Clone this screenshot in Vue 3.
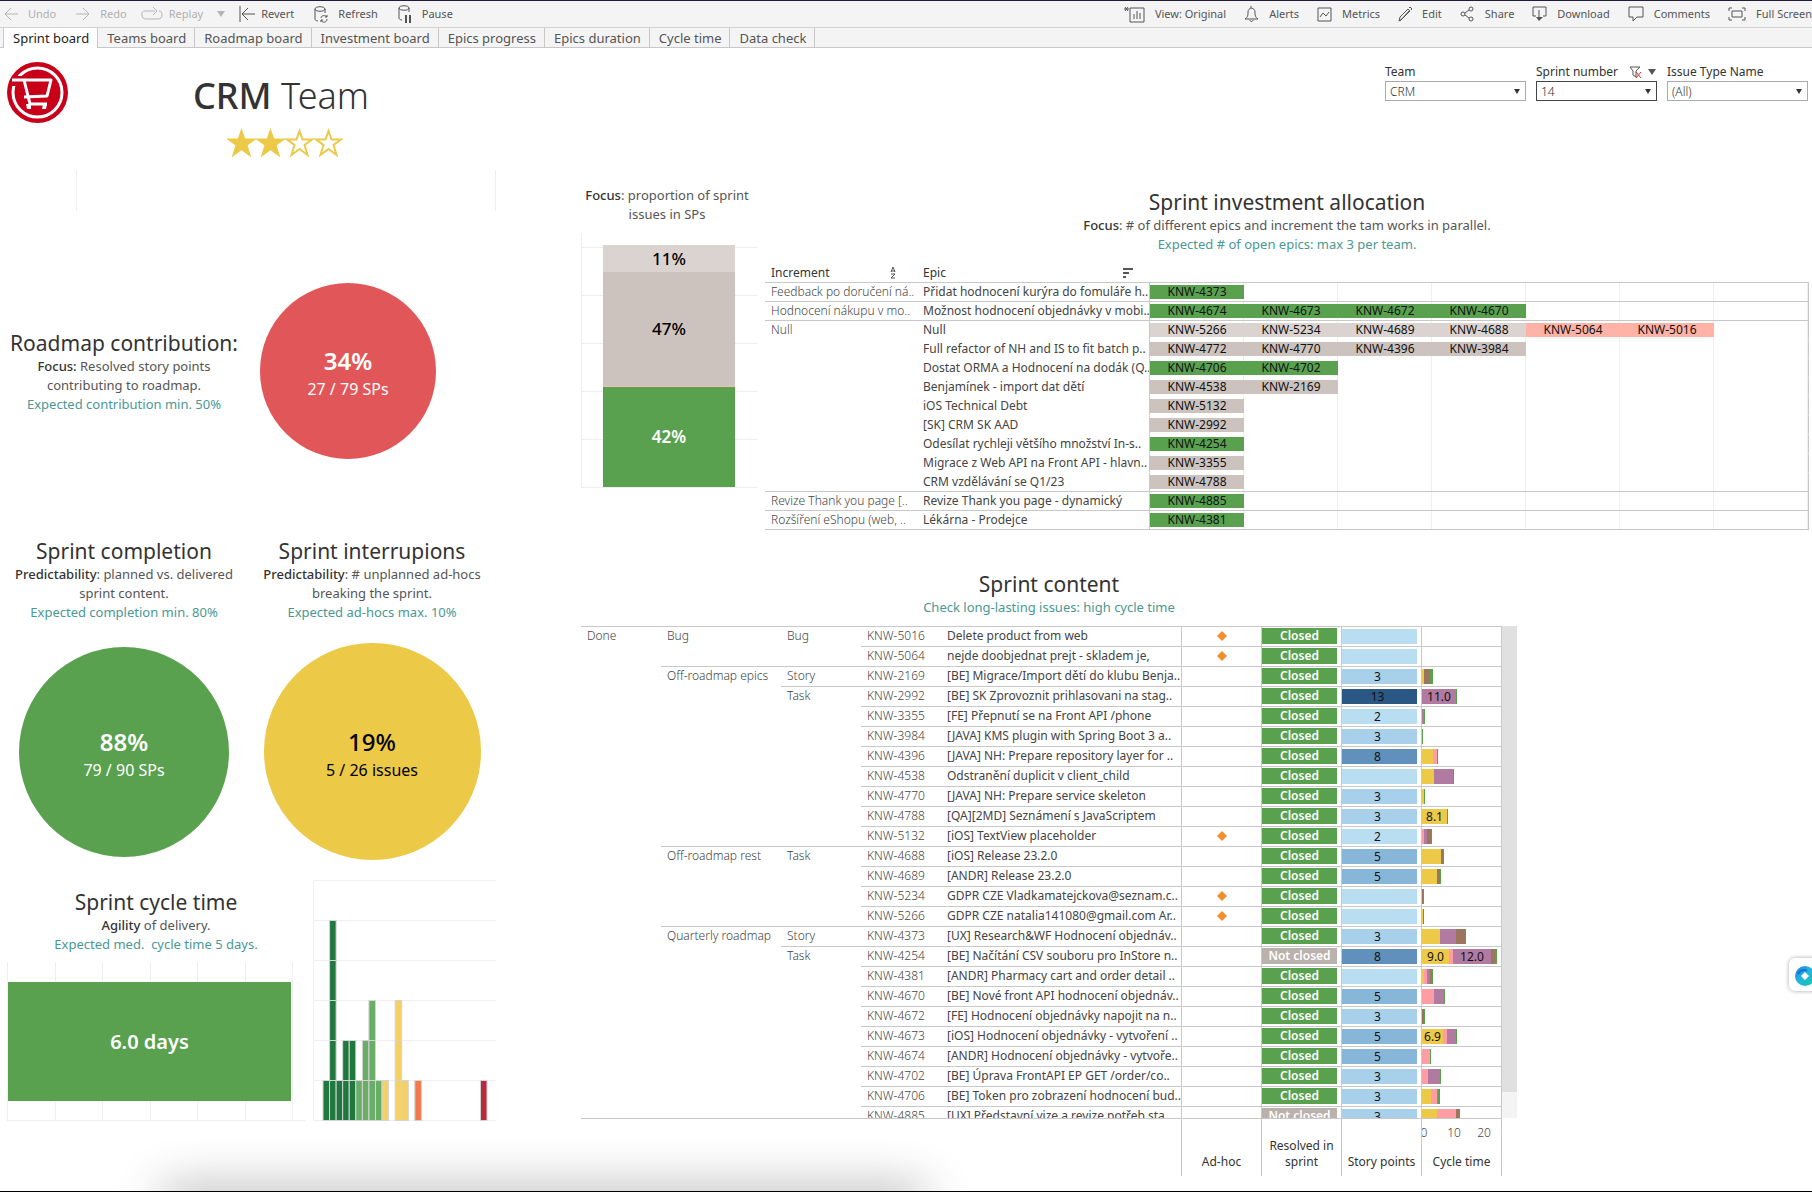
<script setup>
import { ref } from 'vue'

const tabs = ['Sprint board', 'Teams board', 'Roadmap board', 'Investment board', 'Epics progress', 'Epics duration', 'Cycle time', 'Data check']
const activeTab = ref('Sprint board')

const increments = [
  { name: 'Feedback po doručení ná..', epics: [['Přidat hodnocení kurýra do fomuláře h..', 'green', ['4373']]] },
  { name: 'Hodnocení nákupu v mo..', epics: [['Možnost hodnocení objednávky v mobi..', 'green', ['4674', '4673', '4672', '4670']]] },
  {
    name: 'Null',
    epics: [
      ['Null', 'light', ['5266', '5234', '4689', '4688', '5064', '5016']],
      ['Full refactor of NH and IS to fit batch p..', 'taupe', ['4772', '4770', '4396', '3984']],
      ['Dostat ORMA a Hodnocení na dodák (Q..', 'green', ['4706', '4702']],
      ['Benjamínek - import dat dětí', 'taupe', ['4538', '2169']],
      ['iOS Technical Debt', 'taupe', ['5132']],
      ['[SK] CRM SK AAD', 'taupe', ['2992']],
      ['Odesílat rychleji většího množství In-s..', 'green', ['4254']],
      ['Migrace z Web API na Front API - hlavn..', 'taupe', ['3355']],
      ['CRM vzdělávání se Q1/23', 'taupe', ['4788']]
    ]
  },
  { name: 'Revize Thank you page [..', epics: [['Revize Thank you page - dynamický', 'green', ['4885']]] },
  { name: 'Rozšíření eShopu (web, ..', epics: [['Lékárna - Prodejce', 'green', ['4381']]] }
]
const bugs = ['5064', '5016']

// Cycle segments: phase letter, bar length, optional label
const issues = [
  { status: 'Done', statusSpan: 25, area: 'Bug', areaSpan: 2, type: 'Bug', typeSpan: 2, key: '5016', text: 'Delete product from web', adhoc: true, cycle: [] },
  { key: '5064', text: 'nejde doobjednat prejt - skladem je,', adhoc: true, cycle: [] },
  { area: 'Off-roadmap epics', areaSpan: 9, type: 'Story', typeSpan: 1, key: '2169', text: '[BE] Migrace/Import dětí do klubu Benja..', sp: 3, cycle: [['y', 2], ['b', 6], ['g', 3]] },
  { type: 'Task', typeSpan: 8, key: '2992', text: '[BE] SK Zprovoznit prihlasovani na stag..', sp: 13, cycle: [['v', 34, '11.0'], ['g', 1]] },
  { key: '3355', text: '[FE] Přepnutí se na Front API /phone', sp: 2, cycle: [['v', 2], ['g', 1]] },
  { key: '3984', text: '[JAVA] KMS plugin with Spring Boot 3 a..', sp: 3, cycle: [['g', 1]] },
  { key: '4396', text: '[JAVA] NH: Prepare repository layer for ..', sp: 8, cycle: [['y', 11], ['p', 4], ['g', 1]] },
  { key: '4538', text: 'Odstranění duplicit v client_child', cycle: [['y', 12], ['v', 19], ['g', 1]] },
  { key: '4770', text: '[JAVA] NH: Prepare service skeleton', sp: 3, cycle: [['y', 2], ['g', 1]] },
  { key: '4788', text: '[QA][2MD] Seznámení s JavaScriptem', sp: 3, cycle: [['y', 25, '8.1'], ['g', 1]] },
  { key: '5132', text: '[iOS] TextView placeholder', sp: 2, adhoc: true, cycle: [['p', 2], ['v', 3], ['b', 4], ['g', 1]] },
  { area: 'Off-roadmap rest', areaSpan: 4, type: 'Task', typeSpan: 4, key: '4688', text: '[iOS] Release 23.2.0', sp: 5, cycle: [['y', 19], ['b', 2], ['g', 1]] },
  { key: '4689', text: '[ANDR] Release 23.2.0', sp: 5, cycle: [['y', 15], ['b', 3], ['g', 1]] },
  { key: '5234', text: 'GDPR CZE Vladkamatejckova@seznam.c..', adhoc: true, cycle: [['b', 1], ['g', 1]] },
  { key: '5266', text: 'GDPR CZE natalia141080@gmail.com Ar..', adhoc: true, cycle: [['y', 1], ['g', 1]] },
  { area: 'Quarterly roadmap', areaSpan: 10, type: 'Story', typeSpan: 1, key: '4373', text: '[UX] Research&WF Hodnocení objednáv..', sp: 3, cycle: [['y', 18], ['v', 16], ['b', 9], ['g', 1]] },
  { type: 'Task', typeSpan: 9, key: '4254', text: '[BE] Načítání CSV souboru pro InStore n..', sp: 8, open: true, cycle: [['y', 27, '9.0'], ['p', 4], ['v', 38, '12.0'], ['b', 4], ['g', 2]] },
  { key: '4381', text: '[ANDR] Pharmacy cart and order detail ..', cycle: [['y', 2], ['p', 3], ['v', 3], ['b', 1], ['g', 2]] },
  { key: '4670', text: '[BE] Nové front API hodnocení objednáv..', sp: 5, cycle: [['p', 12], ['v', 10], ['g', 1]] },
  { key: '4672', text: '[FE] Hodnocení objednávky napojit na n..', sp: 3, cycle: [['b', 2], ['g', 1]] },
  { key: '4673', text: '[iOS] Hodnocení objednávky - vytvoření ..', sp: 5, cycle: [['y', 21, '6.9'], ['p', 4], ['v', 9], ['g', 1]] },
  { key: '4674', text: '[ANDR] Hodnocení objednávky - vytvoře..', sp: 5, cycle: [['p', 8], ['g', 1]] },
  { key: '4702', text: '[BE] Úprava FrontAPI EP GET /order/co..', sp: 3, cycle: [['p', 6], ['v', 12], ['g', 1]] },
  { key: '4706', text: '[BE] Token pro zobrazení hodnocení bud..', sp: 3, cycle: [['y', 9], ['p', 6], ['v', 1], ['g', 2]] },
  { key: '4885', text: '[UX] Představní vize a revize potřeb sta..', sp: 3, open: true, cycle: [['y', 15], ['p', 19], ['b', 3], ['g', 1]] }
]

// Histogram bins: index, count, colour
const bins = [
  [0, 1, '#21783f'], [1, 5, '#21783f'], [2, 1, '#21783f'], [3, 2, '#21783f'], [4, 2, '#21783f'],
  [5, 1, '#69ae66'], [6, 2, '#69ae66'], [7, 3, '#69ae66'], [8, 1, '#69ae66'],
  [9, 1, '#f4d166'], [11, 3, '#f4d166'], [12, 1, '#f4d166'], [14, 1, '#f3784b'], [24, 1, '#b92a41']
]
const binX = i => 10 + i * 6.56
</script>

<template>
  <div class="page">
    <header class="toolbar">
      <div class="tools">
        <button class="tool off" disabled>
          <svg width="14" height="14" viewBox="0 0 14 14"><path d="M14 7H1M7 1 1 7l6 6" /></svg>Undo
        </button>
        <button class="tool off" disabled>
          <svg width="14" height="14" viewBox="0 0 14 14"><path d="M0 7h13M7 1l6 6-6 6" /></svg>Redo
        </button>
        <button class="tool off near tight" disabled>
          <svg width="22" height="14" viewBox="0 0 22 14"><path d="M14 4H4a3 3 0 0 0-3 4c0 3 2 4 4 4h12c3 0 4-2 4-4 0-3-1-4-3-4M12 0l4 4-4 4" /></svg>Replay
        </button>
        <button class="tool near off" aria-label="Replay options" disabled>
          <svg width="8" height="6" viewBox="0 0 8 6"><path class="solid" d="M0 0h8L4 6z" /></svg>
        </button>
        <button class="tool near tight">
          <svg width="16" height="16" viewBox="0 0 16 16"><path d="M1 0v16M16 8H3M9 2 3 8l6 6" /></svg>Revert
        </button>
        <button class="tool">
          <svg width="14" height="17" viewBox="0 0 14 17"><path d="M1 3v10c0 1 1 2 3 2M11 3v4M1 3c0-3 10-3 10 0s-10 3-10 0M7 12c0-3 5-3 6-1M13 9v2h-2M13 13c0 4-5 4-6 1M7 16v-2h2" /></svg>Refresh
        </button>
        <button class="tool">
          <svg width="14" height="18" viewBox="0 0 14 18"><path d="M1 3v10c0 1 1 2 3 2M11 3v4M1 3c0-3 10-3 10 0s-10 3-10 0" /><path d="M8 10v8M12 10v8" stroke-width="2" /></svg>Pause
        </button>
      </div>
      <div class="tools end">
        <button class="tool">
          <svg width="21" height="17" viewBox="0 0 21 17"><path d="M6 2h14v14H6zM10 8v5M13 5v8M16 7v6M0 3h5M1 1l3 4M4 1 1 5" /></svg>View: Original
        </button>
        <button class="tool">
          <svg width="15" height="16" viewBox="0 0 15 16"><path d="M1 13c3-2 3-4 3-7 0-5 7-5 7 0 0 3 0 5 3 7zM7 2V0M6 14c0 2 3 2 3 0" /></svg>Alerts
        </button>
        <button class="tool">
          <svg width="15" height="15" viewBox="0 0 15 15"><path d="M1 1h13v13H1zM3 10l3-4 3 3 3-4" /></svg>Metrics
        </button>
        <button class="tool">
          <svg width="14" height="15" viewBox="0 0 14 15"><path d="M1 14l1-4L10 2l2 2-8 8zM11 1l1-1 2 2-1 1M2 14l9-10" /></svg>Edit
        </button>
        <button class="tool">
          <svg width="15" height="16" viewBox="0 0 15 16"><circle cx="3" cy="8" r="2" /><circle cx="11" cy="3" r="2" /><circle cx="11" cy="13" r="2" /><path d="M5 7l4-3M5 9l4 3" /></svg>Share
        </button>
        <button class="tool">
          <svg width="15" height="16" viewBox="0 0 15 16"><path d="M4 10H1V1h13v9h-3M7 4v9" /><path class="solid" d="M4 11h7l-4 4z" /></svg>Download
        </button>
        <button class="tool">
          <svg width="16" height="16" viewBox="0 0 16 16"><path d="M1 1h14v10H9l-4 4v-4H1z" /></svg>Comments
        </button>
        <button class="tool">
          <svg width="18" height="14" viewBox="0 0 18 14"><path d="M4 1H1v3M14 1h3v3M4 13H1v-3M14 13h3v-3M4 4h10v6H4z" /></svg>Full Screen
        </button>
      </div>
    </header>

    <nav class="tabs">
      <button v-for="t in tabs" :key="t" class="tab" :class="{ active: t === activeTab }" @click="activeTab = t">{{ t }}</button>
    </nav>

    <section class="heading">
      <div class="brand">
        <svg class="logo" width="61" height="61" viewBox="0 0 61 61" role="img" aria-label="Shop logo">
          <circle cx="30.5" cy="30.5" r="30.5" fill="#c8001a" />
          <circle cx="30.5" cy="30.5" r="24.5" fill="none" stroke="#fff" stroke-width="3" />
          <path d="M7 14h8v10H5z" fill="#c8001a" />
          <g fill="none" stroke="#fff" stroke-width="3" stroke-linejoin="round">
            <path d="M5 18h39l-4 16-23 1" />
            <path d="M17 18l6 24h17" />
          </g>
          <path d="M19 42h5v5h-4zM36 42h4l-1 5h-4z" fill="#fff" />
        </svg>
        <div class="team">
          <h1><b>CRM</b> Team</h1>
          <svg width="116" height="30" viewBox="0 0 116 30" role="img" aria-label="2 of 4 stars">
            <path v-for="i in 4" :key="i" :transform="`translate(${(i - 1) * 29} 0)`" :fill="i < 3 ? '#edc948' : 'none'" stroke="#edc948" stroke-width="2"
              d="M14.500 3l3 8.500h9.500l-7.500 5.500 3 10-8-6-8 6 3-10-7.500-5.500h9.500z" />
          </svg>
        </div>
      </div>
      <form class="filters">
        <div class="filter">
          <label for="f-team">Team</label>
          <div class="pick"><select id="f-team"><option>CRM</option></select><i class="caret"></i></div>
        </div>
        <div class="filter narrow">
          <div class="caption">
            <label for="f-sprint">Sprint number</label>
            <svg width="28" height="13" viewBox="0 0 28 13"><path d="M1 1h10L7 5v6L4 9V5z" fill="none" stroke="#555" /><path d="M7 6l5 6M12 6l-5 6" stroke="#d8302a" /><path d="M19 3h8l-4 6z" fill="#555" /></svg>
          </div>
          <div class="pick strong"><select id="f-sprint"><option>14</option></select><i class="caret"></i></div>
        </div>
        <div class="filter">
          <label for="f-type">Issue Type Name</label>
          <div class="pick"><select id="f-type"><option>(All)</option></select><i class="caret"></i></div>
        </div>
      </form>
    </section>

    <main class="board">
      <div class="metrics">
        <div class="strip"></div>

        <div class="roadmap">
          <div class="blurb">
            <h2>Roadmap contribution:</h2>
            <p><b>Focus:</b> Resolved story points<br />contributing to roadmap.</p>
            <p class="goal">Expected contribution min. 50%</p>
          </div>
          <div class="disc small red"><strong>34%</strong><span>27 / 79 SPs</span></div>
        </div>

        <div class="pair">
          <div class="blurb">
            <h2>Sprint completion</h2>
            <p><b>Predictability</b>: planned vs. delivered<br />sprint content.</p>
            <p class="goal">Expected completion min. 80%</p>
          </div>
          <div class="blurb">
            <h2>Sprint interrupions</h2>
            <p><b>Predictability</b>: # unplanned ad-hocs<br />breaking the sprint.</p>
            <p class="goal">Expected ad-hocs max. 10%</p>
          </div>
          <div class="disc medium green"><strong>88%</strong><span>79 / 90 SPs</span></div>
          <div class="disc large yellow"><strong>19%</strong><span>5 / 26 issues</span></div>
        </div>

        <div class="cycle">
          <div class="median">
            <div class="blurb">
              <h2>Sprint cycle time</h2>
              <p><b>Agility</b> of delivery.</p>
              <p class="goal">Expected med.&nbsp; cycle time 5 days.</p>
            </div>
            <div class="gauge">
              <i v-for="i in 6" :key="i"></i>
              <div class="value">6.0 days</div>
            </div>
          </div>
          <svg class="histogram" width="183" height="241" viewBox="0 0 183 241" role="img" aria-label="Cycle time distribution">
            <path d="M.5 0v241M0 .5h183M0 40.500h183M0 80.500h183M0 120.500h183M0 160.500h183M0 200.500h183M0 240.500h183" stroke="#f0f0f0" />
            <rect v-for="b in bins" :key="b[0]" :x="binX(b[0])" :y="240.5 - b[1] * 40" width="6.56" :height="b[1] * 40" :fill="b[2]" stroke="#d3d3d3" />
            <path d="M10 200.500h59M82 200.500h13M17 160.500h6M17 120.500h6M17 80.500h6M56 160.500h6M82 160.500h6" stroke="#d3d3d3" />
          </svg>
        </div>
      </div>

      <div class="detail">
        <div class="top">
          <div class="split">
            <p><b>Focus</b>: proportion of sprint<br />issues in SPs</p>
            <div class="stack">
              <div class="part light">11%</div>
              <div class="part taupe">47%</div>
              <div class="part green">42%</div>
            </div>
          </div>

          <section class="invest">
            <div class="blurb">
              <h2>Sprint investment allocation</h2>
              <p><b>Focus</b>: # of different epics and increment the tam works in parallel.</p>
              <p class="goal">Expected # of open epics: max 3 per team.</p>
            </div>
            <table class="epics">
              <colgroup><col class="c-inc" /><col class="c-epic" /><col /></colgroup>
              <thead>
                <tr>
                  <th><div class="sortable wide">Increment
                    <svg width="8" height="12" viewBox="0 0 8 12"><path d="M2 5l2-5 2 5M2 4h4M2 7h4L2 11h4" fill="none" stroke="#555" /></svg></div></th>
                  <th><div class="sortable">Epic
                    <svg width="10" height="11" viewBox="0 0 10 11"><path d="M0 1h10M0 5h6M0 9h3" stroke="#555" stroke-width="2" /></svg></div></th>
                  <th></th>
                </tr>
              </thead>
              <tbody>
                <template v-for="inc in increments" :key="inc.name">
                  <tr v-for="(e, i) in inc.epics" :key="e[0]" :class="{ first: i === 0 }">
                    <td v-if="i === 0" class="inc" :rowspan="inc.epics.length">{{ inc.name }}</td>
                    <td class="epic">{{ e[0] }}</td>
                    <td class="plot">
                      <div class="track">
                        <span v-for="k in e[2]" :key="k" class="unit" :class="bugs.includes(k) ? 'salmon' : e[1]">KNW-{{ k }}</span>
                      </div>
                    </td>
                  </tr>
                </template>
              </tbody>
            </table>
          </section>
        </div>

        <section class="content">
          <div class="blurb">
            <h2>Sprint content</h2>
            <p class="goal">Check long-lasting issues: high cycle time</p>
          </div>
          <div class="viewport">
            <table class="issues">
              <colgroup>
                <col class="w80" /><col class="w120" /><col class="w80" /><col class="w80" /><col />
                <col class="w80" /><col class="w80" /><col class="w80" /><col class="w81" />
              </colgroup>
              <tbody>
                <tr v-for="r in issues" :key="r.key">
                  <td v-if="r.status" :rowspan="r.statusSpan">{{ r.status }}</td>
                  <td v-if="r.area" :rowspan="r.areaSpan">{{ r.area }}</td>
                  <td v-if="r.type" :rowspan="r.typeSpan">{{ r.type }}</td>
                  <td>KNW-{{ r.key }}</td>
                  <td class="summary">{{ r.text }}</td>
                  <td class="cell"><svg v-if="r.adhoc" class="mark" width="10" height="10" viewBox="0 0 10 10"><path d="M5 0l5 5-5 5-5-5z" fill="#f28e2b" /></svg></td>
                  <td class="cell"><div class="chip" :class="{ open: r.open }">{{ r.open ? 'Not closed' : 'Closed' }}</div></td>
                  <td class="cell"><div class="points" :class="'sp' + (r.sp || 0)">{{ r.sp }}</div></td>
                  <td class="cell last">
                    <div class="phases"><span v-for="(s, i) in r.cycle" :key="i" :class="'ph-' + s[0]" :style="{ width: s[1] + 'px' }">{{ s[2] }}</span></div>
                  </td>
                </tr>
              </tbody>
            </table>
            <div class="scroll"><div class="thumb"></div></div>
          </div>
          <div class="axes">
            <div class="axis">Ad-hoc</div>
            <div class="axis">Resolved in<br />sprint</div>
            <div class="axis">Story points</div>
            <div class="axis scale">
              <div class="ticks"><span>0</span><span>10</span><span>20</span></div>
              Cycle time
            </div>
          </div>
        </section>
      </div>
    </main>

    <button class="assistant" aria-label="Assistant">
      <svg width="20" height="20" viewBox="0 0 20 20">
        <defs><linearGradient id="asst" x1="0" y1="0" x2="1" y2="1"><stop offset="0" stop-color="#1f7fe0" /><stop offset=".5" stop-color="#22b8dc" /><stop offset="1" stop-color="#10c9a0" /></linearGradient></defs>
        <circle cx="10" cy="10" r="10" fill="url(#asst)" />
        <path d="M3 8c2-4 6-5 9-3" fill="none" stroke="#1a6fd8" stroke-width="2" />
        <path d="M10 6l4 4-4 4-4-4z" fill="#fff" />
      </svg>
    </button>
    <div class="dock"></div>
  </div>
</template>

<style>
body {
  margin: 0;
  background: #fff;
}
</style>

<style scoped>
.page {
  position: relative;
  box-sizing: border-box;
  min-height: 100vh;
  overflow: hidden;
  border-top: 1px solid #1d1d33;
  border-bottom: 1px solid #000;
  color: #333;
  font-family: "Noto Sans", sans-serif;
  font-size: 12px;
}
button {
  font-family: inherit;
  cursor: pointer;
}
h1, h2, p {
  margin: 0;
  font-weight: 400;
}
b {
  font-weight: 500;
  color: #333;
}

/* Toolbar */
.toolbar {
  display: flex;
  justify-content: space-between;
  height: 26px;
  background: #f4f4f4;
  border-bottom: 1px solid #d0d0d0;
}
.tools {
  display: flex;
  align-items: center;
  padding-left: 4px;
}
.tool {
  display: flex;
  align-items: center;
  gap: 10px;
  margin-right: 20px;
  padding: 0;
  border: 0;
  background: none;
  color: #555;
  font-size: 11px;
  line-height: 20px;
  white-space: nowrap;
}
.tool svg {
  fill: none;
  stroke: #555;
}
.tool .solid {
  fill: #555;
  stroke: none;
}
.off {
  color: #b0b0b0;
  cursor: default;
}
.off svg {
  stroke: #b4b4b4;
}
.off .solid {
  fill: #b4b4b4;
}
.near {
  margin-left: -6px;
}
.tight {
  gap: 6px;
}
.end .tool {
  margin: 0 0 0 18px;
}

/* Sheet tabs */
.tabs {
  display: flex;
  height: 20px;
  padding-left: 3px;
  background: #f4f4f4;
  box-shadow: inset 0 -1px #c8c8c8;
}
.tab {
  padding: 0 8px 0 9px;
  border: 0;
  border-right: 1px solid #c8c8c8;
  background: none;
  color: #555;
  font-size: 13px;
  line-height: 18px;
}
.tab.active {
  border-left: 1px solid #c8c8c8;
  background: #fff;
  color: #222;
}

/* Title and filters */
.heading {
  display: flex;
  justify-content: space-between;
  height: 122px;
}
.brand {
  display: flex;
}
.logo {
  margin: 14px 0 0 7px;
}
.team {
  display: flex;
  flex-direction: column;
  align-items: center;
  width: 426px;
  padding-top: 24px;
}
h1 {
  font-size: 36px;
  font-weight: 300;
  line-height: 48px;
  margin-bottom: 8px;
}
.team svg {
  margin-left: 8px;
}
.filters {
  display: flex;
  gap: 10px;
  padding: 15px 4px 0 0;
}
.filter {
  width: 141px;
}
.narrow {
  width: 121px;
}
.filter label {
  display: block;
  line-height: 18px;
}
.caption {
  display: flex;
  align-items: center;
  justify-content: space-between;
}
.pick {
  position: relative;
}
.pick select {
  display: block;
  box-sizing: border-box;
  width: 100%;
  height: 20px;
  padding: 0 4px;
  border: 1px solid #aaa;
  border-radius: 0;
  background: #fff;
  color: #333;
  font-family: inherit;
  font-size: 12px;
  font-weight: 300;
  appearance: none;
}
.pick.strong select {
  border-color: #444;
}
.caret {
  position: absolute;
  top: 8px;
  right: 6px;
  border: 3px solid transparent;
  border-top: 5px solid #333;
  border-bottom: 0;
  pointer-events: none;
}

/* Shared text block */
.blurb {
  text-align: center;
}
h2 {
  font-size: 21px;
  line-height: 25px;
  padding-bottom: 1px;
}
p {
  color: #555;
  font-size: 13px;
  line-height: 19px;
}
.goal {
  color: #499894;
}

.board {
  display: flex;
}

/* Left column */
.metrics {
  flex: none;
  width: 581px;
}
.strip {
  width: 418px;
  height: 41px;
  margin-left: 76px;
  border: solid #eee;
  border-width: 0 1px;
}
.roadmap {
  display: flex;
  gap: 12px;
  margin-top: 72px;
}
.roadmap .blurb {
  width: 248px;
  padding-top: 48px;
}
.disc {
  display: flex;
  flex-direction: column;
  align-items: center;
  justify-content: center;
  box-sizing: border-box;
  padding-top: 8px;
  border-radius: 50%;
  color: #fff;
  font-size: 16px;
  line-height: 28px;
}
.disc strong {
  font-size: 24px;
  font-weight: 600;
}
.small {
  width: 176px;
  height: 176px;
}
.medium {
  width: 210px;
  height: 210px;
}
.large {
  width: 217px;
  height: 217px;
}
.red {
  background: #e15759;
}
.disc.yellow {
  background: #edc948;
  color: #000;
}
.yellow strong {
  font-weight: 500;
}
.pair {
  display: grid;
  grid-template-columns: 248px 248px;
  row-gap: 21px;
  place-items: center;
  margin-top: 80px;
}
.cycle {
  display: flex;
  gap: 8px;
  margin-top: 20px;
}
.median {
  width: 305px;
}
.median .blurb {
  padding: 10px 0 0 7px;
}
.gauge {
  position: relative;
  display: flex;
  box-sizing: border-box;
  height: 159px;
  margin: 8px 0 0 7px;
  padding-right: 12px;
  border-bottom: 1px solid #eee;
}
.gauge i {
  flex: 1;
  border-left: 1px solid #eee;
}
.gauge i:nth-child(6) {
  border-right: 1px solid #eee;
}
.value {
  position: absolute;
  top: 20px;
  right: 14px;
  left: 1px;
  background: #59a14f;
  color: #fff;
  font-size: 20px;
  font-weight: 600;
  line-height: 119px;
  text-align: center;
}

/* Right column */
.detail {
  flex: 1;
  min-width: 0;
}
.top {
  display: flex;
  gap: 8px;
  padding-right: 3px;
}
.split {
  flex: none;
  width: 176px;
}
.split p {
  padding: 16px 4px 0 0;
  text-align: center;
}
.stack {
  box-sizing: border-box;
  height: 255px;
  margin-top: 9px;
  padding: 12px 22px 0 21px;
  border-left: 1px solid #eee;
  background: linear-gradient(to top, #eee 1px, transparent 1px) 0 100% / 100% 48px;
}
.part {
  color: #000;
  font-size: 17px;
  font-weight: 500;
  text-align: center;
}
.part.light {
  line-height: 27px;
}
.part.taupe {
  line-height: 114px;
}
.part.green {
  border-top: 1px solid #f0bfae;
  color: #fff;
  font-weight: 600;
  line-height: 100px;
}
.green {
  background: #59a14f;
}
.light {
  background: #dbd3d0;
}
.taupe {
  background: #cdc3be;
}
.salmon {
  background: #ffb2a6;
}
.invest {
  flex: 1;
  min-width: 0;
  padding-top: 20px;
}
table {
  width: 100%;
  border-collapse: separate;
  border-spacing: 0;
  table-layout: fixed;
}
td, th {
  box-sizing: border-box;
  padding: 0 0 0 6px;
  overflow: hidden;
  font-weight: 400;
  line-height: 18px;
  text-align: left;
  vertical-align: top;
  white-space: nowrap;
}
.epics {
  margin-top: 10px;
  border-bottom: 1px solid #c8c8c8;
}
.epics th {
  height: 18px;
}
.c-inc {
  width: 152px;
}
.c-epic {
  width: 232px;
}
.sortable {
  display: flex;
  align-items: center;
  justify-content: space-between;
  padding-right: 16px;
}
.sortable.wide {
  padding-right: 20px;
}
.epics td {
  height: 19px;
  border-top: 1px solid transparent;
}
.epics .first td {
  border-top-color: #c8c8c8;
}
.epics .inc {
  color: #444;
  font-weight: 300;
}
.epic {
  color: #444;
}
.epics .plot {
  padding: 0;
  border-right: 1px solid #c8c8c8;
  border-left: 1px solid #c8c8c8;
  background: linear-gradient(to right, transparent calc(100% - 1px), #eee 0) 0 0 / calc(100% / 7) 100%;
}
.track {
  display: flex;
  box-sizing: border-box;
  height: 18px;
  padding: 2px 0;
}
.unit {
  width: calc(100% / 7);
  color: #111;
  line-height: 14px;
  text-align: center;
}

/* Issue table */
.content {
  width: 936px;
  max-width: 100%;
  margin-top: 42px;
}
.viewport {
  display: flex;
  height: 492px;
  margin-top: 9px;
  overflow: hidden;
}
.issues {
  flex: 1;
  color: #444;
}
.issues td {
  height: 20px;
  border-top: 1px solid #c8c8c8;
  font-weight: 300;
}
.issues .summary {
  font-weight: 400;
}
.w80 {
  width: 80px;
}
.w81 {
  width: 81px;
}
.w120 {
  width: 120px;
}
.issues .cell {
  padding: 1px 0 0;
  border-left: 1px solid #c8c8c8;
  color: #111;
  font-weight: 400;
  text-align: center;
}
.issues .last {
  border-right: 1px solid #c8c8c8;
}
.mark {
  display: block;
  margin: 3px auto 0;
}
.chip {
  margin-right: 4px;
  background: #59a14f;
  color: #fff;
  font-weight: 600;
  line-height: 16px;
}
.chip.open {
  background: #bab0ac;
}
.points {
  height: 15px;
  margin: 1px 4px 0 0;
  padding-right: 4px;
  line-height: 15px;
}
.sp0, .sp2 {
  background: #b9ddf1;
}
.sp3 {
  background: #a8d0eb;
}
.sp5 {
  background: #88b6d9;
}
.sp8 {
  background: #6090bb;
}
.sp13 {
  background: #2a5783;
}
.phases {
  display: flex;
  height: 15px;
  margin-top: 1px;
  line-height: 15px;
}
.ph-y {
  background: #edc948;
}
.ph-p {
  background: #ff9da7;
}
.ph-v {
  background: #b07aa1;
}
.ph-b {
  background: #9c755f;
}
.ph-g {
  background: #59a14f;
}
.scroll {
  width: 15px;
  background: #f4f4f4;
}
.thumb {
  height: 466px;
  background: #e0e0e0;
}
.axes {
  display: flex;
  justify-content: flex-end;
  margin-right: 15px;
  border-top: 1px solid #c8c8c8;
}
.axis {
  display: flex;
  flex-direction: column;
  justify-content: flex-end;
  box-sizing: border-box;
  width: 80px;
  height: 57px;
  padding-bottom: 6px;
  border-left: 1px solid #c8c8c8;
  line-height: 16px;
  text-align: center;
  white-space: nowrap;
}
.scale {
  justify-content: space-between;
  width: 81px;
  padding-top: 6px;
  border-right: 1px solid #c8c8c8;
  overflow: hidden;
}
.ticks {
  display: flex;
  margin-left: -13px;
  color: #444;
  font-weight: 300;
}
.ticks span {
  width: 30px;
}

/* Overlays */
.assistant {
  position: absolute;
  top: 957px;
  right: -12px;
  width: 35px;
  height: 33px;
  padding: 6px 0 0 6px;
  border: 0;
  border-radius: 6px;
  background: #fff;
  box-shadow: 0 0 4px rgba(0, 0, 0, 0.35);
  text-align: left;
}
.dock {
  position: absolute;
  right: 49%;
  bottom: -20px;
  left: 9%;
  height: 20px;
  box-shadow: 0 0 48px rgba(0, 0, 0, 0.45);
  pointer-events: none;
}
</style>
